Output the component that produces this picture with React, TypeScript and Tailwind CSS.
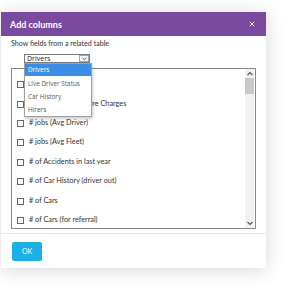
import { X } from "lucide-react";

const rows = [
  "# Hires",
  "# of Outstanding Hire Charges",
  "# jobs (Avg Driver)",
  "# jobs (Avg Fleet)",
  "# of Accidents in last year",
  "# of Car History (driver out)",
  "# of Cars",
  "# of Cars (for referral)",
];

const options = ["Live Driver Status", "Car History", "Hirers"];

export default function App() {
  return (
    <div className="w-[300px] h-[304px] bg-white pt-[12px] pl-[1px] font-['Lato',sans-serif] overflow-hidden">
      <div className="w-[265px] bg-white shadow-[0_2px_18px_rgba(0,0,0,0.16)]">
        <div className="h-[24px] bg-[#7a4a9f] flex items-center justify-between pl-[9px] pr-[10px]">
          <span className="text-white text-[9px] font-bold leading-none">Add columns</span>
          <X size={8} strokeWidth={3} className="text-white" />
        </div>

        <div className="px-[10px] pt-[3px] pb-[4px]">
          <div className="text-[7.1px] text-[#333] leading-[10px]">Show fields from a related table</div>

          <div className="relative ml-[13px] mt-[5px] w-[66px] h-[9px] border border-[#7a7a7a] flex items-center bg-white">
            <span className="flex-1 pl-[2px] text-[7px] leading-none text-[#222] font-['Open_Sans',sans-serif]">Drivers</span>
            <span className="w-[10px] h-[7px] border border-[#9ab] bg-[#eef5fb] flex items-center justify-center">
              <svg width="5" height="4" viewBox="0 0 6 4">
                <path d="M0.5 0.5 L3 3 L5.5 0.5" fill="none" stroke="#444" strokeWidth="1" />
              </svg>
            </span>
            <div className="absolute left-[-1px] top-[8px] w-[68px] border border-[#a0a0a0] bg-white shadow-[1px_2px_3px_rgba(0,0,0,0.2)] z-10">
              <div className="h-[12px] pl-[3px] flex items-center bg-[#3a8ee6] text-white text-[6.4px] font-['Open_Sans',sans-serif] whitespace-nowrap">
                Drivers
              </div>
              <div className="mt-[1px]">
                {options.map((o) => (
                  <div
                    key={o}
                    className="h-[13px] pl-[3px] flex items-center text-[#555] text-[6.4px] font-['Open_Sans',sans-serif] whitespace-nowrap"
                  >
                    {o}
                  </div>
                ))}
              </div>
            </div>
          </div>

          <div className="mt-[5px] h-[161px] border border-[#888] flex">
            <div className="flex-1 overflow-hidden pt-[6px] pl-[5px]">
              {rows.map((r) => (
                <div key={r} className="h-[19.4px] flex items-center gap-[5px]">
                  <span className="w-[7px] h-[7px] border border-[#666] bg-white shrink-0" />
                  <span className="text-[7.3px] text-[#333] whitespace-nowrap">{r}</span>
                </div>
              ))}
            </div>
            <div className="w-[9px] bg-[#f1f1f1] flex flex-col items-center mr-[1px]">
              <svg width="6" height="8" viewBox="0 0 6 8" className="mt-[1px]">
                <path d="M0.5 5 L3 2.5 L5.5 5" fill="none" stroke="#555" strokeWidth="1.2" />
              </svg>
              <div className="w-[9px] h-[16px] bg-[#c8c8c8]" />
              <div className="flex-1" />
              <svg width="6" height="8" viewBox="0 0 6 8" className="mb-[1px]">
                <path d="M0.5 3 L3 5.5 L5.5 3" fill="none" stroke="#555" strokeWidth="1.2" />
              </svg>
            </div>
          </div>
        </div>

        <div className="border-t border-[#e6e6e6] px-[11px] pt-[8px] pb-[7px]">
          <button className="w-[30px] h-[19px] rounded-[2px] bg-[#19b1e8] text-white text-[7px] flex items-center justify-center">
            OK
          </button>
        </div>
      </div>
    </div>
  );
}
